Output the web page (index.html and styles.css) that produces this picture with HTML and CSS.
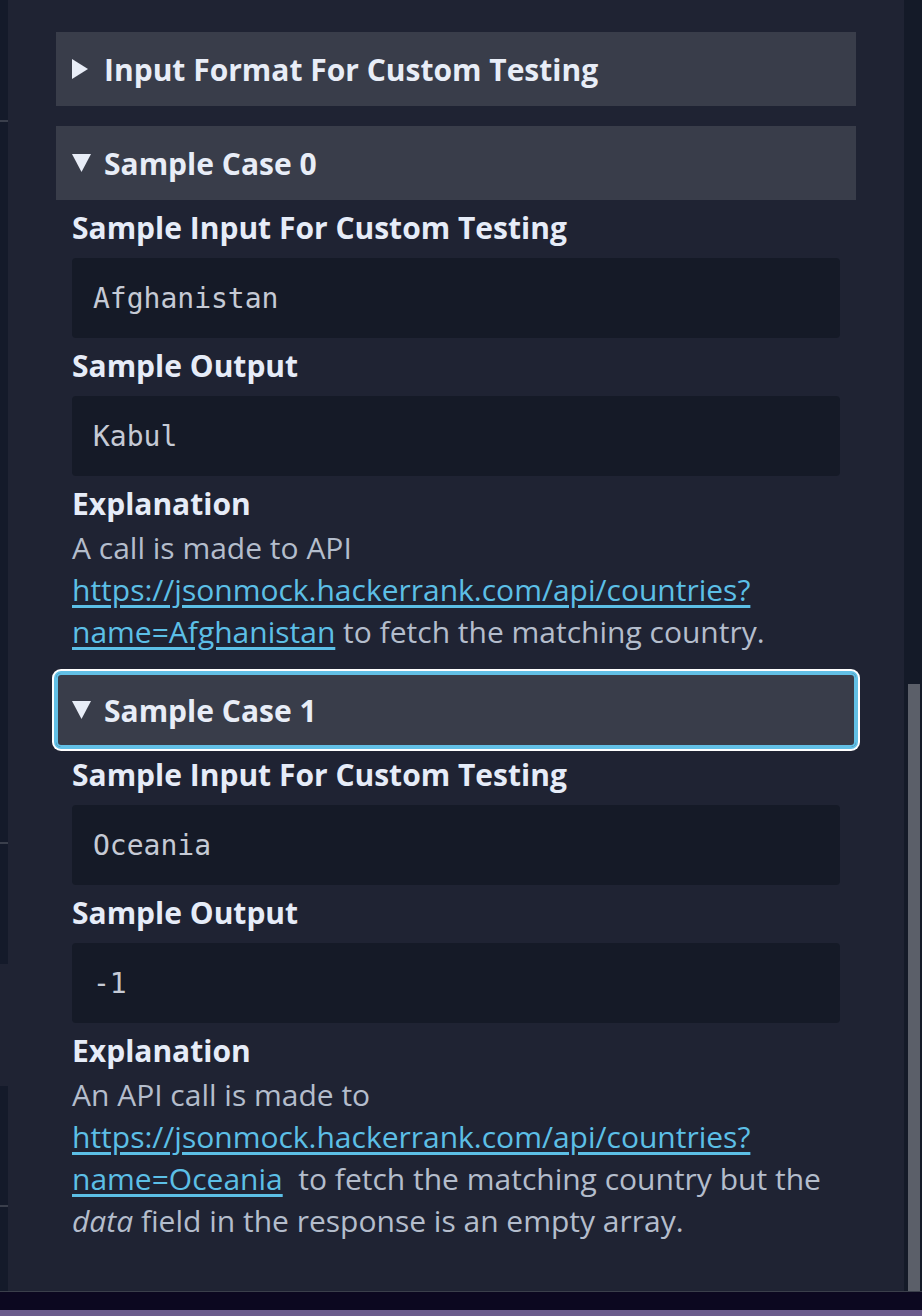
FILE: index.html
```html
<!DOCTYPE html>
<html>
<head>
<meta charset="utf-8">
<link rel="stylesheet" href="styles.css">
</head>
<body>
<div class="app">
  <div class="row">
    <div class="leftstrip">
      <div class="seg dark s1"></div>
      <div class="seg dark s2"></div>
      <div class="seg dark s3"></div>
      <div class="seg light s4"></div>
      <div class="seg dark s5"></div>
      <div class="seg dark s6"></div>
    </div>
    <main class="main">
      <section class="case">
        <div class="case-head">
          <span class="tri-box"><svg class="tri" width="16" height="20" viewBox="0 0 16 20"><path d="M0 0 L16 10 L0 20 Z" fill="#e8edf7"/></svg></span>
          <span>Input Format For Custom Testing</span>
        </div>
      </section>

      <section class="case">
        <div class="case-head">
          <span class="tri-box"><svg class="tri" width="19" height="18" viewBox="0 0 19 18"><path d="M0 0 L19 0 L9.5 18 Z" fill="#e8edf7"/></svg></span>
          <span>Sample Case 0</span>
        </div>
        <div class="case-body">
          <h4 class="sub">Sample Input For Custom Testing</h4>
          <pre class="code">Afghanistan</pre>
          <h4 class="sub">Sample Output</h4>
          <pre class="code">Kabul</pre>
          <h4 class="sub">Explanation</h4>
          <p class="text">A call is made to API <a href="#">https://jsonmock.hackerrank.com/api/countries?<wbr>name=Afghanistan</a> to fetch the matching country.</p>
        </div>
      </section>

      <section class="case">
        <div class="case-head focused">
          <span class="tri-box"><svg class="tri" width="19" height="18" viewBox="0 0 19 18"><path d="M0 0 L19 0 L9.5 18 Z" fill="#e8edf7"/></svg></span>
          <span>Sample Case 1</span>
        </div>
        <div class="case-body">
          <h4 class="sub">Sample Input For Custom Testing</h4>
          <pre class="code">Oceania</pre>
          <h4 class="sub">Sample Output</h4>
          <pre class="code">-1</pre>
          <h4 class="sub">Explanation</h4>
          <p class="text">An API call is made to <a href="#">https://jsonmock.hackerrank.com/api/countries?<wbr>name=Oceania</a>&nbsp; to fetch the matching country but the <em>data</em> field in the response is an empty array.</p>
        </div>
      </section>
    </main>
    <div class="track"><div class="thumb"></div></div>
  </div>
  <div class="bottom"></div>
</div>
</body>
</html>
```

FILE: styles.css
```css
html, body {
  margin: 0;
  padding: 0;
  background: #1f2333;
}
body {
  width: 922px;
  height: 1316px;
  overflow: hidden;
  font-family: "Open Sans", "Noto Sans", sans-serif;
}
.app {
  display: flex;
  flex-direction: column;
  height: 1316px;
}
.row {
  display: flex;
  height: 1291px;
}
.leftstrip {
  width: 8px;
  display: flex;
  flex-direction: column;
}
.seg.dark { background: #141a2a; }
.seg.light { background: #1f2333; }
.s1 { height: 120px; border-bottom: 2px solid #3a3f4c; }
.s2 { height: 720px; border-bottom: 2px solid #3a3f4c; }
.s3 { height: 120px; }
.s4 { height: 122px; }
.s5 { height: 119px; border-bottom: 2px solid #3a3f4c; }
.s6 { flex: 1; }

.main {
  flex: 1;
  padding: 32px 48px 0 48px;
  display: flex;
  flex-direction: column;
  gap: 20px;
}
.case-head {
  height: 74px;
  background: #393d4a;
  display: flex;
  align-items: center;
  padding-left: 16px;
  color: #e8edf7;
  font-weight: 700;
  font-size: 30px;
  box-sizing: border-box;
}
.case-head.focused {
  border-radius: 5px;
  box-shadow: inset 0 0 0 2px #62c0e6, 0 0 0 2px #62c0e6, 0 0 0 4px #ffffff;
}
.tri-box {
  width: 32px;
  flex: none;
  display: flex;
  align-items: center;
}
.tri { flex: none; }
.case-body {
  padding: 0 16px;
}
.sub {
  margin: 10px 0 0 0;
  font-size: 30px;
  line-height: 36px;
  font-weight: 700;
  color: #e6ecf8;
}
.code {
  margin: 12px 0 0 0;
  height: 80px;
  box-sizing: border-box;
  background: #151a27;
  border-radius: 4px;
  padding: 0 21px;
  display: flex;
  align-items: center;
  font-family: "DejaVu Sans Mono", "Liberation Mono", monospace;
  font-size: 28px;
  color: #c5cad5;
}
.text {
  margin: 5px 0 0 0;
  font-size: 30px;
  line-height: 42px;
  color: #b4bdcc;
}
.text a {
  color: #5cbfe6;
  text-decoration: underline;
  text-underline-offset: 4px;
}
.text em { font-style: italic; }

.track {
  width: 18px;
  background: #141a28;
  padding-top: 684px;
  box-sizing: border-box;
  display: flex;
  flex-direction: column;
}
.thumb {
  flex: 1;
  margin: 0 2px 0 4px;
  background: #5b5f69;
}
.bottom {
  height: 25px;
  border-top: 1px solid #3b3f4b;
  box-sizing: border-box;
  background: linear-gradient(#0c0820, #0c0820) top/100% 18px no-repeat, #6b5a8c;
}
```
